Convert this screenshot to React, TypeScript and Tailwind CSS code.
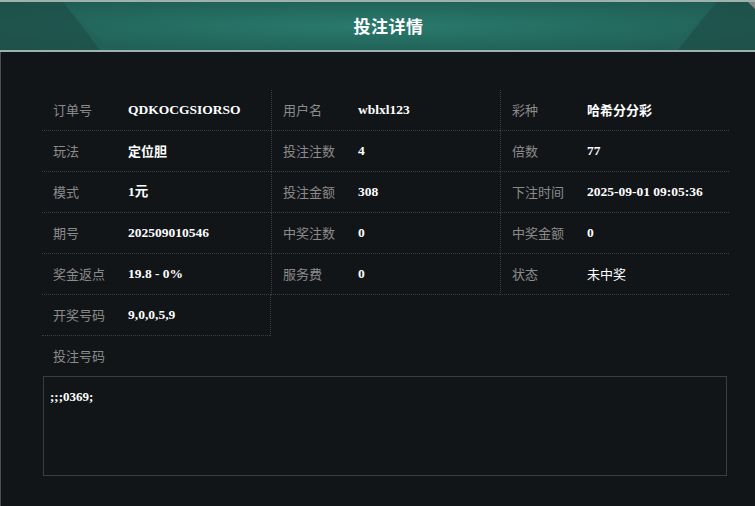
const rows: { label: string, value: string, cjk?: boolean, light?: boolean }[][] = [
  [
    { label: '订单号', value: 'QDKOCGSIORSO' },
    { label: '用户名', value: 'wblxl123' },
    { label: '彩种', value: '哈希分分彩', cjk: true },
  ],
  [
    { label: '玩法', value: '定位胆', cjk: true },
    { label: '投注注数', value: '4' },
    { label: '倍数', value: '77' },
  ],
  [
    { label: '模式', value: '1元' },
    { label: '投注金额', value: '308' },
    { label: '下注时间', value: '2025-09-01 09:05:36' },
  ],
  [
    { label: '期号', value: '202509010546' },
    { label: '中奖注数', value: '0' },
    { label: '中奖金额', value: '0' },
  ],
  [
    { label: '奖金返点', value: '19.8 - 0%' },
    { label: '服务费', value: '0' },
    { label: '状态', value: '未中奖', cjk: true, light: true },
  ],
]

const labelFont = "font-['Noto_Sans_CJK_SC',sans-serif]"
const valueFont = "font-['Liberation_Serif','Noto_Sans_CJK_SC',serif]"

function Cell({ label, value, cjk, light, first }: { label: string, value: string, cjk?: boolean, light?: boolean, first?: boolean }) {
  return (
    <div className={`flex h-[41px] items-center border-b border-dotted border-[#3b3e42] pl-[11px] ${first ? '' : 'border-l'}`}>
      <div className={`w-[75px] shrink-0 text-[13px] text-[#8b8b8b] ${labelFont}`}>{label}</div>
      <div
        className={`text-white ${light ? 'font-normal' : 'font-bold'} ${cjk ? `text-[13px] ${labelFont}` : `text-[13.5px] ${valueFont}`}`}
      >
        {value}
      </div>
    </div>
  )
}

export default function App() {
  return (
    <div className="h-[506px] w-[755px] overflow-hidden bg-[#121518]">
      {/* Header */}
      <div className="relative h-[52px] border-b-2 border-t-2 border-[#9fb1ad] bg-[radial-gradient(ellipse_at_center,#2a7a6d_0%,#246b60_45%,#1f5a51_100%)]">
        <svg className="absolute inset-0" width="755" height="48" viewBox="0 0 755 48">
          <polygon points="0,0 63,0 82,24 100,48 0,48" fill="#1d4f48" opacity="0.75" />
          <polygon points="63,0 82,24 100,48 110,48" fill="#245f57" opacity="0.5" />
          <polygon points="755,0 717,0 697,24 678,48 755,48" fill="#1d4f48" opacity="0.75" />
          <polygon points="717,0 697,24 678,48 668,48" fill="#245f57" opacity="0.5" />
          <polygon points="748,0 755,0 755,7" fill="#7d8a88" />
        </svg>
        <div className={`relative flex h-full items-center justify-center pl-[22px] text-[17px] font-bold tracking-[0.5px] text-white ${labelFont}`}>
          投注详情
        </div>
      </div>

      {/* Body */}
      <div className="h-[454px] border-l border-[#4a4f53] pt-[38px]">
        <div className="ml-[41px] w-[687px]">
          <div className="grid grid-cols-3">
            {rows.map((row, i) =>
              row.map((c, j) => <Cell key={`${i}-${j}`} {...c} first={j === 0} />)
            )}
            <div className="border-r border-dotted border-[#3b3e42]">
              <Cell label="开奖号码" value="9,0,0,5,9" first />
            </div>
          </div>
          <div className={`flex h-[40px] items-center pl-[11px] text-[13px] text-[#8b8b8b] ${labelFont}`}>投注号码</div>
          <div className="ml-[1px] h-[100px] w-[684px] border border-[#3a3d41] px-[6px] pt-[10px]">
            <div className={`text-[13px] font-bold text-white ${valueFont}`}>;;;0369;</div>
          </div>
        </div>
      </div>
    </div>
  )
}
